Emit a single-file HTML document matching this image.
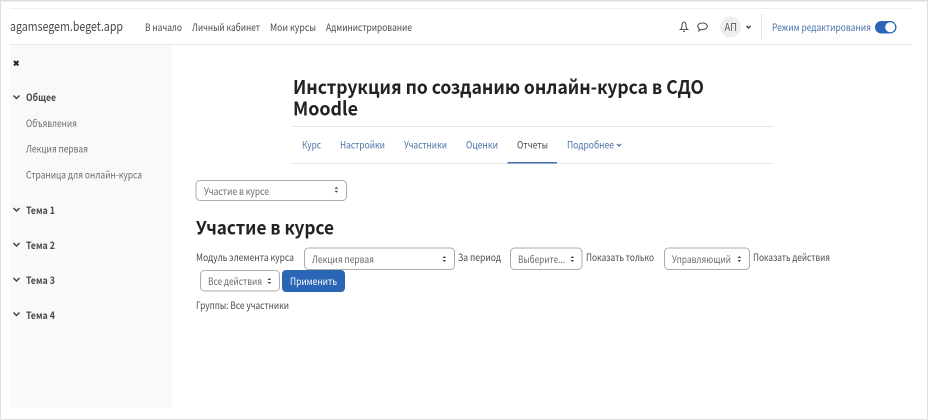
<!DOCTYPE html>
<html lang="ru">
<head>
<meta charset="utf-8">
<title>Участие в курсе</title>
<style>
html,body{margin:0;padding:0;background:#fff;width:928px;height:420px;overflow:hidden}
svg{display:block;position:absolute;left:0;top:0;filter:blur(.35px)}
text{font-family:"Noto Sans CJK SC","Liberation Sans",sans-serif;font-size:10px;fill:#4a4a4a}
.b{font-weight:700}
.h{font-weight:700;fill:#222}
.l{fill:#4a70a8}
.s{fill:#6a6a6a}
.sel{fill:#fff;stroke:#ababab;stroke-width:1}
.ch{fill:none;stroke:#444;stroke-width:1.500}
</style>
</head>
<body>
<svg width="928" height="420" viewBox="0 0 928 420" xmlns="http://www.w3.org/2000/svg">
<!-- frame -->
<rect x=".5" y=".5" width="927" height="419" fill="#fff" stroke="#dedede"/>
<rect x="0" y="0" width="928" height="1.500" fill="#dedede"/>
<rect x="10" y="8" width="902" height="1" fill="#eeeeee"/>
<rect x="10" y="44" width="902" height="1" fill="#e9e9e9"/>
<!-- sidebar -->
<rect x="10" y="45" width="162" height="363" fill="#f8f9fa"/>

<!-- navbar -->
<text x="10" y="31" style="font-size:13px" textLength="113" lengthAdjust="spacingAndGlyphs">agamsegem.beget.app</text>
<text x="145" y="31" textLength="37" lengthAdjust="spacingAndGlyphs">В начало</text>
<text x="192" y="31" textLength="68" lengthAdjust="spacingAndGlyphs">Личный кабинет</text>
<text x="270" y="31" textLength="46" lengthAdjust="spacingAndGlyphs">Мои курсы</text>
<text x="326" y="31" textLength="86" lengthAdjust="spacingAndGlyphs">Администрирование</text>

<!-- bell -->
<path d="M679.500 29.500h9M680.500 29.500c1.200-1 1.500-2.200 1.500-4 0-2.200 1-3.500 2-3.500s2 1.300 2 3.500c0 1.800.3 3 1.500 4M683 31.300h2" fill="none" stroke="#555" stroke-width="1.100"/>
<!-- chat -->
<path d="M702.500 23c2.800 0 4.800 1.500 4.800 3.300s-2 3.300-4.800 3.300c-.5 0-1 0-1.400-.1l-2.300 1.300.7-2c-1.100-.6-1.800-1.500-1.800-2.500 0-1.800 2-3.300 4.800-3.300z" fill="none" stroke="#555" stroke-width="1.100"/>
<!-- avatar -->
<circle cx="730.500" cy="27" r="10.500" fill="#eeeeee"/>
<text x="724.500" y="31" style="font-size:10.500px;fill:#555" textLength="12.500" lengthAdjust="spacingAndGlyphs">АП</text>
<path d="M746.500 26l2 2 2-2" class="ch"/>
<rect x="761" y="13" width="1" height="27" fill="#e6e6e6"/>
<text x="772" y="31" class="l" textLength="99" lengthAdjust="spacingAndGlyphs">Режим редактирования</text>
<rect x="875" y="21" width="21.500" height="12.500" rx="6.250" fill="#2a66b5"/>
<circle cx="890.200" cy="27.200" r="5" fill="#fff"/>

<!-- sidebar content -->
<path d="M14 61l4.400 4.400M18.400 61l-4.400 4.400" fill="none" stroke="#222" stroke-width="2"/>
<path d="M13.500 95.500l3 3 3-3" class="ch"/>
<text x="26" y="101" class="b" textLength="30" lengthAdjust="spacingAndGlyphs">Общее</text>
<text x="26" y="127" class="s" textLength="51" lengthAdjust="spacingAndGlyphs">Объявления</text>
<text x="26" y="152.500" class="s" textLength="62" lengthAdjust="spacingAndGlyphs">Лекция первая</text>
<text x="26" y="178.500" class="s" textLength="116" lengthAdjust="spacingAndGlyphs">Страница для онлайн-курса</text>
<path d="M13.500 208l3 3 3-3" class="ch"/>
<text x="26" y="214" class="b" textLength="29" lengthAdjust="spacingAndGlyphs">Тема 1</text>
<path d="M13.500 243l3 3 3-3" class="ch"/>
<text x="26" y="249" class="b" textLength="29" lengthAdjust="spacingAndGlyphs">Тема 2</text>
<path d="M13.500 278l3 3 3-3" class="ch"/>
<text x="26" y="284" class="b" textLength="29" lengthAdjust="spacingAndGlyphs">Тема 3</text>
<path d="M13.500 312.500l3 3 3-3" class="ch"/>
<text x="26" y="319" class="b" textLength="29" lengthAdjust="spacingAndGlyphs">Тема 4</text>

<!-- title -->
<text x="293" y="94" class="h" style="font-size:19px" textLength="411" lengthAdjust="spacingAndGlyphs">Инструкция по созданию онлайн-курса в СДО</text>
<text x="293" y="115.500" class="h" style="font-size:19px" textLength="65" lengthAdjust="spacingAndGlyphs">Moodle</text>
<rect x="292" y="126" width="481" height="1" fill="#e2e2e2"/>

<!-- tabs -->
<text x="302" y="148.500" class="l" textLength="19" lengthAdjust="spacingAndGlyphs">Курс</text>
<text x="340" y="148.500" class="l" textLength="45" lengthAdjust="spacingAndGlyphs">Настройки</text>
<text x="404" y="148.500" class="l" textLength="43" lengthAdjust="spacingAndGlyphs">Участники</text>
<text x="466" y="148.500" class="l" textLength="32" lengthAdjust="spacingAndGlyphs">Оценки</text>
<text x="517" y="148.500" textLength="31" lengthAdjust="spacingAndGlyphs">Отчеты</text>
<text x="567" y="148.500" class="l" textLength="47" lengthAdjust="spacingAndGlyphs">Подробнее</text>
<path d="M617 144l2 2 2-2" fill="none" stroke="#4a70a8" stroke-width="1.300"/>
<rect x="292" y="163" width="481" height="1" fill="#e6e6e6"/>
<rect x="507.500" y="162" width="49.500" height="1.500" fill="#3f72b0"/>

<!-- select 1 -->
<rect x="196" y="180.500" width="150.500" height="20" rx="4" class="sel"/>
<text x="204" y="195" class="s" textLength="65" lengthAdjust="spacingAndGlyphs">Участие в курсе</text>
<path d="M334.500 188.800l1.800-2 1.800 2zM334.500 190.800l1.800 2 1.800-2z" fill="#444"/>

<!-- heading -->
<text x="196" y="234.500" class="h" style="font-size:18.500px" textLength="138" lengthAdjust="spacingAndGlyphs">Участие в курсе</text>

<!-- filter row -->
<text x="196" y="261" textLength="98" lengthAdjust="spacingAndGlyphs">Модуль элемента курса</text>
<rect x="304.500" y="248" width="150" height="21.500" rx="4" class="sel"/>
<text x="312" y="263" class="s" textLength="62" lengthAdjust="spacingAndGlyphs">Лекция первая</text>
<path d="M442.500 258l1.800-2 1.800 2zM442.500 260l1.800 2 1.800-2z" fill="#444"/>

<text x="458" y="261" textLength="43" lengthAdjust="spacingAndGlyphs">За период</text>
<rect x="510.500" y="248" width="71.500" height="21.500" rx="4" class="sel"/>
<text x="518" y="263" class="s" textLength="47" lengthAdjust="spacingAndGlyphs">Выберите...</text>
<path d="M570.500 258l1.800-2 1.800 2zM570.500 260l1.800 2 1.800-2z" fill="#444"/>

<text x="586" y="261" textLength="68" lengthAdjust="spacingAndGlyphs">Показать только</text>
<rect x="664.500" y="248" width="85" height="21.500" rx="4" class="sel"/>
<text x="672" y="263" class="s" textLength="59" lengthAdjust="spacingAndGlyphs">Управляющий</text>
<path d="M737.500 258l1.800-2 1.800 2zM737.500 260l1.800 2 1.800-2z" fill="#444"/>

<text x="753" y="261" textLength="77" lengthAdjust="spacingAndGlyphs">Показать действия</text>

<!-- row 2 -->
<rect x="200.500" y="270.500" width="79" height="20.500" rx="4" class="sel"/>
<text x="208" y="285" class="s" textLength="54" lengthAdjust="spacingAndGlyphs">Все действия</text>
<path d="M267.500 280l1.800-2 1.800 2zM267.500 282l1.800 2 1.800-2z" fill="#444"/>
<rect x="282" y="270" width="63" height="22" rx="4" fill="#2a66b5"/>
<text x="290" y="285" style="fill:#fff" textLength="47" lengthAdjust="spacingAndGlyphs">Применить</text>

<text x="196" y="309" textLength="93" lengthAdjust="spacingAndGlyphs">Группы: Все участники</text>
</svg>
</body>
</html>
